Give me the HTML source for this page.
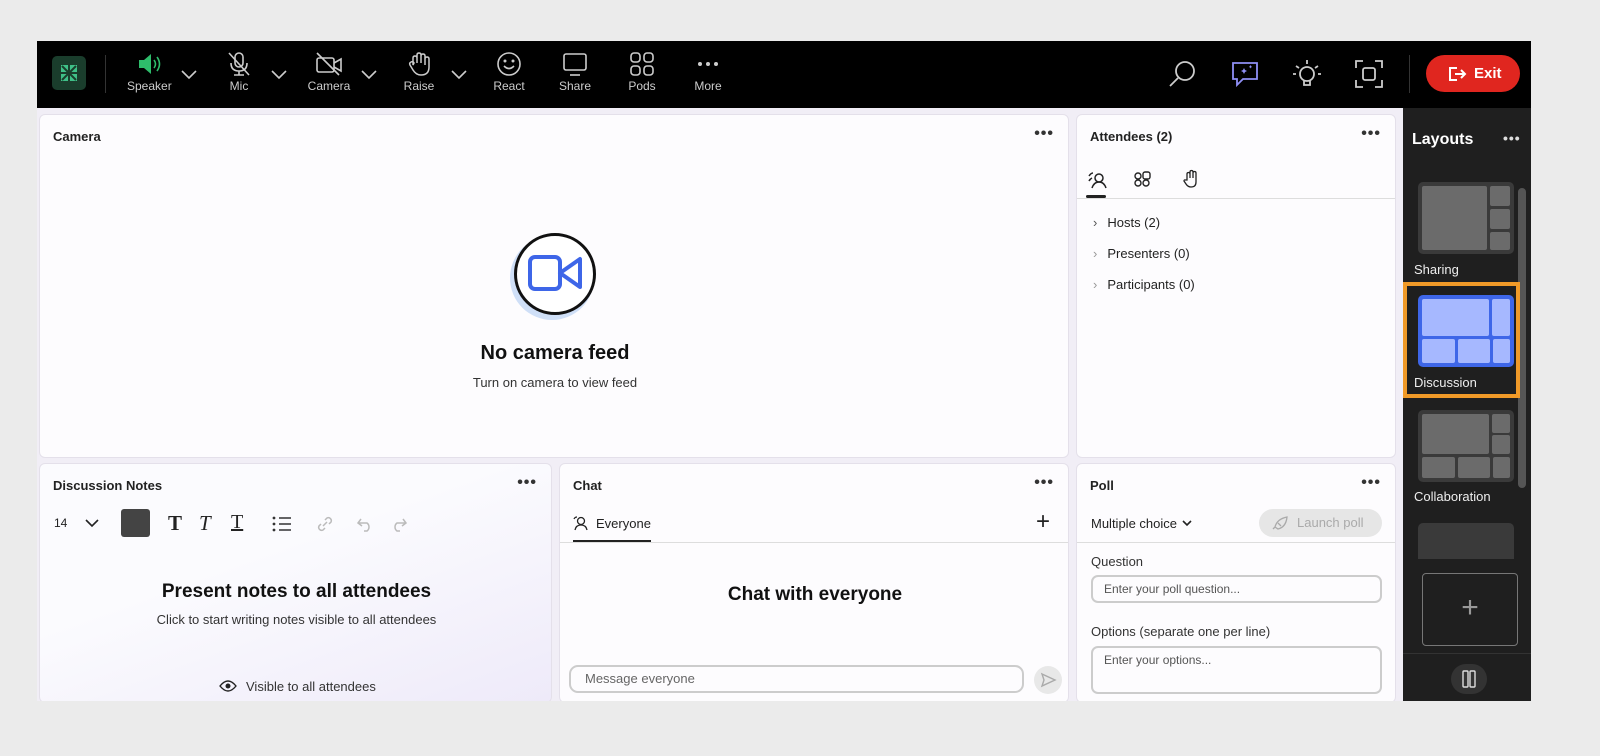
<!DOCTYPE html>
<html><head><meta charset="utf-8">
<style>
*{box-sizing:border-box;margin:0;padding:0}
body{width:1600px;height:756px;background:#ebebeb;font-family:"Liberation Sans",sans-serif;position:relative;overflow:hidden;color:#222}
.abs{position:absolute}
#app{position:absolute;left:37px;top:41px;width:1494px;height:660px;background:#f1eef6;overflow:hidden}
#tb{position:absolute;left:0;top:0;width:1494px;height:67px;background:#000}
.tbi{position:absolute;top:10px;text-align:center;color:#ddd;font-size:12px}
.tbi svg{display:block;margin:0 auto 2px}
.lbl{font-size:12px;color:#ccc}
.panel{position:absolute;background:#fdfcfe;border:1px solid #e4e0ea;border-radius:6px;overflow:hidden}
.ptitle{position:absolute;left:13px;top:14px;font-size:13px;font-weight:bold;color:#222}
.dots{position:absolute;top:10px;font-size:16px;font-weight:bold;letter-spacing:1px;color:#333}
#side{position:absolute;left:1366px;top:67px;width:128px;height:593px;background:#1f1f1f}
.lay{position:absolute;left:15px;width:96px;height:72px;background:#3a3a3a;border-radius:5px}
.lay div{position:absolute;background:#6b6b6b;border-radius:2px}
.slbl{position:absolute;left:11px;color:#eee;font-size:13px}
</style></head><body>
<div id="app">
 <div id="tb">
  <div class="abs" style="left:15px;top:15px;width:34px;height:34px;background:#1a3d2c;border-radius:5px"><svg width="34" height="34"><rect x="9" y="9" width="7" height="7" fill="#3fbf87"/><rect x="18" y="9" width="7" height="7" fill="#3fbf87"/><rect x="9" y="18" width="7" height="7" fill="#3fbf87"/><rect x="18" y="18" width="7" height="7" fill="#3fbf87"/><path d="M10 10L24 24M24 10L10 24" stroke="#1a3d2c" stroke-width="2"/></svg></div>
  <div class="abs" style="left:68px;top:14px;width:1px;height:38px;background:#333"></div>
  <div class="tbi" style="left:90px;width:44px"><svg width="28" height="26"><path d="M4 9h5l7-6v20l-7-6H4z" fill="#2ebd6b"/><path d="M19 9q3 4 0 8M22 6q5 7 0 14" stroke="#2ebd6b" stroke-width="1.6" fill="none"/></svg><span class="lbl">Speaker</span></div>
  <svg class="abs" style="left:143px;top:27px" width="18" height="12"><path d="M2 3l7 7 7-7" stroke="#ccc" stroke-width="1.6" fill="none"/></svg>
  <div class="tbi" style="left:180px;width:44px"><svg width="28" height="26"><rect x="10" y="2" width="8" height="14" rx="4" stroke="#ccc" stroke-width="1.6" fill="none"/><path d="M6 12q0 8 8 8t8-8M14 20v4M9 24h10M4 2l20 22" stroke="#ccc" stroke-width="1.6" fill="none"/></svg><span class="lbl">Mic</span></div>
  <svg class="abs" style="left:233px;top:27px" width="18" height="12"><path d="M2 3l7 7 7-7" stroke="#ccc" stroke-width="1.6" fill="none"/></svg>
  <div class="tbi" style="left:268px;width:48px"><svg width="30" height="26"><rect x="3" y="7" width="17" height="14" rx="2" stroke="#ccc" stroke-width="1.6" fill="none"/><path d="M20 12l7-4v12l-7-4M3 2l22 22" stroke="#ccc" stroke-width="1.6" fill="none"/></svg><span class="lbl">Camera</span></div>
  <svg class="abs" style="left:323px;top:27px" width="18" height="12"><path d="M2 3l7 7 7-7" stroke="#ccc" stroke-width="1.6" fill="none"/></svg>
  <div class="tbi" style="left:360px;width:44px"><svg width="28" height="26"><path d="M8 14V7q0-2 2-2t2 2v5V4q0-2 2-2t2 2v8V5q0-2 2-2t2 2v9V8q0-2 2-2t2 2v8q0 8-8 8q-5 0-8-5l-3-5q-1-2 1-3t3 1z" stroke="#ccc" stroke-width="1.5" fill="none"/></svg><span class="lbl">Raise</span></div>
  <svg class="abs" style="left:413px;top:27px" width="18" height="12"><path d="M2 3l7 7 7-7" stroke="#ccc" stroke-width="1.6" fill="none"/></svg>
  <div class="tbi" style="left:450px;width:44px"><svg width="28" height="26"><circle cx="14" cy="13" r="11" stroke="#ccc" stroke-width="1.6" fill="none"/><circle cx="10" cy="10" r="1.5" fill="#ccc"/><circle cx="18" cy="10" r="1.5" fill="#ccc"/><path d="M9 15q5 5 10 0" stroke="#ccc" stroke-width="1.6" fill="none"/></svg><span class="lbl">React</span></div>
  <div class="tbi" style="left:516px;width:44px"><svg width="28" height="26"><rect x="3" y="3" width="22" height="16" rx="2" stroke="#ccc" stroke-width="1.6" fill="none"/><path d="M9 24h10" stroke="#ccc" stroke-width="1.6"/></svg><span class="lbl">Share</span></div>
  <div class="tbi" style="left:583px;width:44px"><svg width="28" height="26"><rect x="3" y="2" width="9" height="9" rx="3" stroke="#ccc" stroke-width="1.6" fill="none"/><rect x="16" y="2" width="9" height="9" rx="3" stroke="#ccc" stroke-width="1.6" fill="none"/><rect x="3" y="15" width="9" height="9" rx="3" stroke="#ccc" stroke-width="1.6" fill="none"/><rect x="16" y="15" width="9" height="9" rx="3" stroke="#ccc" stroke-width="1.6" fill="none"/></svg><span class="lbl">Pods</span></div>
  <div class="tbi" style="left:649px;width:44px"><svg width="28" height="26"><circle cx="6" cy="13" r="2" fill="#ccc"/><circle cx="14" cy="13" r="2" fill="#ccc"/><circle cx="22" cy="13" r="2" fill="#ccc"/></svg><span class="lbl">More</span></div>
  <svg class="abs" style="left:1130px;top:17px" width="32" height="32"><circle cx="18" cy="13" r="9" stroke="#ccc" stroke-width="1.8" fill="none"/><path d="M11 20l-8 8" stroke="#ccc" stroke-width="1.8"/></svg>
  <svg class="abs" style="left:1192px;top:17px" width="32" height="32"><path d="M4 5h24v16H14l-6 6v-6H4z" stroke="#8f8ff5" stroke-width="1.8" fill="none"/><path d="M12 13l2-1 1-2 1 2 2 1-2 1-1 2-1-2zM20 9l1-1 .5-1 .5 1 1 1-1 .5-.5 1-.5-1z" fill="#8f8ff5"/></svg>
  <svg class="abs" style="left:1254px;top:17px" width="32" height="32"><circle cx="16" cy="16" r="7" stroke="#ccc" stroke-width="1.8" fill="none"/><path d="M13 23v4h6v-4M16 2v4M5 8l3 2M27 8l-3 2M2 16h3M27 16h3" stroke="#ccc" stroke-width="1.8" fill="none"/></svg>
  <svg class="abs" style="left:1316px;top:17px" width="32" height="32"><path d="M3 10V3h7M22 3h7v7M29 22v7h-7M10 29H3v-7" stroke="#ccc" stroke-width="1.8" fill="none"/><rect x="10" y="10" width="12" height="12" rx="2" stroke="#ccc" stroke-width="1.8" fill="none"/></svg>
  <div class="abs" style="left:1372px;top:14px;width:1px;height:38px;background:#333"></div>
  <div class="abs" style="left:1389px;top:14px;width:94px;height:37px;background:#e0261f;border-radius:19px;color:#fff;font-weight:bold;font-size:15px;line-height:37px;padding-left:48px"><svg class="abs" style="left:22px;top:10px" width="20" height="18"><path d="M9 3H2v12h7" stroke="#fff" stroke-width="2" fill="none"/><path d="M7 9h10M13 5l4 4-4 4" stroke="#fff" stroke-width="2" fill="none"/></svg>Exit</div>
 </div>

 <!-- Camera -->
 <div class="panel" style="left:2px;top:73px;width:1030px;height:344px">
  <div class="ptitle">Camera</div><div class="dots" style="right:14px">•••</div>
  <div class="abs" style="left:470px;top:121px;width:84px;height:84px;border-radius:50%;background:#cfdff7"></div>
  <div class="abs" style="left:474px;top:118px;width:82px;height:82px;border-radius:50%;border:3px solid #111;background:#fff"></div>
  <svg class="abs" style="left:488px;top:138px" width="58" height="42"><rect x="2" y="4" width="30" height="32" rx="5" stroke="#3e66e8" stroke-width="4" fill="none"/><path d="M32 20l20-14v28z" stroke="#3e66e8" stroke-width="4" fill="none" stroke-linejoin="round"/></svg>
  <div class="abs" style="left:0;width:1030px;top:227px;text-align:center;font-size:20px;font-weight:bold;color:#111">No camera feed</div>
  <div class="abs" style="left:0;width:1030px;top:260px;text-align:center;font-size:13px;color:#333">Turn on camera to view feed</div>
 </div>

 <!-- Attendees -->
 <div class="panel" style="left:1039px;top:73px;width:320px;height:344px">
  <div class="ptitle">Attendees (2)</div><div class="dots" style="right:14px">•••</div>
  <svg class="abs" style="left:10px;top:55px" width="20" height="20"><circle cx="12" cy="8" r="4" stroke="#222" stroke-width="1.5" fill="none"/><path d="M5 18q2-6 7-6t7 6M2 6q2-3 4-3M2 11q1-2 3-3" stroke="#222" stroke-width="1.5" fill="none"/></svg>
  <div class="abs" style="left:9px;top:80px;width:20px;height:3px;background:#222;border-radius:2px"></div>
  <svg class="abs" style="left:57px;top:55px" width="18" height="18"><circle cx="4" cy="6" r="3" stroke="#222" stroke-width="1.4" fill="none"/><rect x="9" y="2" width="7" height="7" rx="2" stroke="#222" stroke-width="1.4" fill="none"/><circle cx="4" cy="13" r="3" stroke="#222" stroke-width="1.4" fill="none"/><circle cx="12" cy="13" r="3" stroke="#222" stroke-width="1.4" fill="none"/></svg>
  <svg class="abs" style="left:104px;top:54px" width="20" height="20"><path d="M6 11V5q0-1.5 1.5-1.5T9 5v4V3q0-1.5 1.5-1.5T12 3v6V4q0-1.5 1.5-1.5T15 4v9q0 5-5 5-3 0-5-3l-2-3q0-1.5 1.5-1z" stroke="#222" stroke-width="1.3" fill="none"/></svg>
  <div class="abs" style="left:0;top:83px;width:320px;height:1px;background:#ddd"></div>
  <div class="abs" style="left:16px;top:92px;font-size:13px;line-height:31px;color:#222">
   <div><span style="color:#555;margin-right:10px">&#x203A;</span>Hosts (2)</div>
   <div><span style="color:#999;margin-right:10px">&#x203A;</span>Presenters (0)</div>
   <div><span style="color:#999;margin-right:10px">&#x203A;</span>Participants (0)</div>
  </div>
 </div>

 <!-- Notes -->
 <div class="panel" style="left:2px;top:422px;width:513px;height:240px;background:linear-gradient(160deg,#fbfbfe 40%,#eeeaf9)">
  <div class="ptitle">Discussion Notes</div><div class="dots" style="right:14px">•••</div>
  <div class="abs" style="left:14px;top:52px;font-size:12px">14</div>
  <svg class="abs" style="left:44px;top:53px" width="16" height="12"><path d="M2 3l6 6 6-6" stroke="#222" stroke-width="1.6" fill="none"/></svg>
  <div class="abs" style="left:81px;top:45px;width:29px;height:28px;background:#444;border-radius:3px"></div>
  <div class="abs" style="left:128px;top:47px;font-family:'Liberation Serif',serif;font-size:21px;font-weight:bold">T</div>
  <div class="abs" style="left:159px;top:47px;font-family:'Liberation Serif',serif;font-size:21px;font-style:italic">T</div>
  <div class="abs" style="left:191px;top:47px;font-family:'Liberation Serif',serif;font-size:20px;text-decoration:underline">T</div>
  <svg class="abs" style="left:232px;top:51px" width="20" height="18"><path d="M7 3h12M7 9h12M7 15h12" stroke="#333" stroke-width="1.6"/><circle cx="2" cy="3" r="1.4" fill="#333"/><circle cx="2" cy="9" r="1.4" fill="#333"/><circle cx="2" cy="15" r="1.4" fill="#333"/></svg>
  <svg class="abs" style="left:275px;top:50px" width="20" height="20"><path d="M8 12l4-4M6 10l-2 2a3 3 0 004 4l2-2M14 10l2-2a3 3 0 00-4-4l-2 2" stroke="#bbb" stroke-width="1.5" fill="none"/></svg>
  <svg class="abs" style="left:316px;top:51px" width="20" height="18"><path d="M5 4L2 8l4 3M2 8h9a5 5 0 010 8H8" stroke="#bbb" stroke-width="1.5" fill="none"/></svg>
  <svg class="abs" style="left:348px;top:51px" width="20" height="18"><path d="M15 4l3 4-4 3M18 8H9a5 5 0 000 8h3" stroke="#bbb" stroke-width="1.5" fill="none"/></svg>
  <div class="abs" style="left:0;width:513px;top:117px;text-align:center;font-size:19px;font-weight:bold;color:#111">Present notes to all attendees</div>
  <div class="abs" style="left:0;width:513px;top:148px;text-align:center;font-size:13px;color:#333">Click to start writing notes visible to all attendees</div>
  <svg class="abs" style="left:179px;top:215px" width="18" height="14"><path d="M1 7q8-10 16 0-8 10-16 0z" stroke="#222" stroke-width="1.4" fill="none"/><circle cx="9" cy="7" r="2.5" fill="#222"/></svg>
  <div class="abs" style="left:206px;top:215px;font-size:13px;color:#333">Visible to all attendees</div>
 </div>

 <!-- Chat -->
 <div class="panel" style="left:522px;top:422px;width:510px;height:240px">
  <div class="ptitle">Chat</div><div class="dots" style="right:14px">•••</div>
  <svg class="abs" style="left:13px;top:51px" width="16" height="16"><circle cx="8" cy="6" r="3.5" stroke="#222" stroke-width="1.3" fill="none"/><path d="M2 15q1-5 6-5t6 5M1 4q1-2 3-2" stroke="#222" stroke-width="1.3" fill="none"/></svg>
  <div class="abs" style="left:36px;top:52px;font-size:13px">Everyone</div>
  <div class="abs" style="left:13px;top:76px;width:78px;height:2px;background:#222"></div>
  <div class="abs" style="right:18px;top:44px;font-size:24px;font-weight:300;color:#222">+</div>
  <div class="abs" style="left:0;top:78px;width:510px;height:1px;background:#ddd"></div>
  <div class="abs" style="left:0;width:510px;top:120px;text-align:center;font-size:19px;font-weight:bold;color:#111">Chat with everyone</div>
  <div class="abs" style="left:9px;top:201px;width:455px;height:28px;border:2px solid #ccc;border-radius:9px;font-size:13px;color:#666;padding:4px 14px">Message everyone</div>
  <div class="abs" style="left:474px;top:202px;width:28px;height:28px;border-radius:50%;background:#e8e8e8"><svg width="28" height="28"><path d="M8 8l13 6-13 6 2-6z" stroke="#aaa" stroke-width="1.4" fill="none"/></svg></div>
 </div>

 <!-- Poll -->
 <div class="panel" style="left:1039px;top:422px;width:320px;height:240px">
  <div class="ptitle">Poll</div><div class="dots" style="right:14px">•••</div>
  <div class="abs" style="left:14px;top:52px;font-size:13px">Multiple choice <svg width="12" height="10"><path d="M2 3l4 4 4-4" stroke="#222" stroke-width="1.6" fill="none"/></svg></div>
  <div class="abs" style="left:182px;top:45px;width:123px;height:28px;border-radius:14px;background:#e6e6e6;color:#aaa;font-size:13px;line-height:28px;padding-left:38px"><svg class="abs" style="left:12px;top:6px" width="18" height="16"><path d="M4 12q2-8 12-10-1 10-9 12zM4 12l-2 2M7 8l3 3" stroke="#aaa" stroke-width="1.3" fill="none"/></svg>Launch poll</div>
  <div class="abs" style="left:0;top:78px;width:320px;height:1px;background:#ddd"></div>
  <div class="abs" style="left:14px;top:90px;font-size:13px;color:#333">Question</div>
  <div class="abs" style="left:14px;top:111px;width:291px;height:28px;border:2px solid #ccc;border-radius:7px;font-size:12px;color:#555;padding:5px 11px">Enter your poll question...</div>
  <div class="abs" style="left:14px;top:160px;font-size:13px;color:#333">Options (separate one per line)</div>
  <div class="abs" style="left:14px;top:182px;width:291px;height:48px;border:2px solid #ccc;border-radius:7px;font-size:12px;color:#555;padding:5px 11px">Enter your options...</div>
 </div>

 <!-- Side -->
 <div id="side">
  <div class="abs" style="left:9px;top:23px;color:#fff;font-size:16px;font-weight:bold">Layouts</div>
  <div class="abs" style="left:100px;top:22px;color:#ddd;font-size:14px;font-weight:bold;letter-spacing:1px">•••</div>
  <div class="abs" style="left:115px;top:62px;width:8px;height:380px"><div class="abs" style="left:0;top:18px;width:8px;height:300px;background:#555;border-radius:4px"></div></div>
  <div class="lay" style="top:74px;height:72px"><div style="left:4px;top:4px;width:65px;height:64px"></div><div style="left:72px;top:4px;width:20px;height:20px"></div><div style="left:72px;top:27px;width:20px;height:20px"></div><div style="left:72px;top:50px;width:20px;height:18px"></div></div>
  <div class="slbl" style="top:154px">Sharing</div>
  <div class="abs" style="left:0px;top:174px;width:117px;height:116px;border:4px solid #f09a28"></div>
  <div class="lay" style="top:187px;background:#3e66e8"><div style="left:4px;top:4px;width:67px;height:37px;background:#a6b8ff"></div><div style="left:74px;top:4px;width:18px;height:37px;background:#a6b8ff"></div><div style="left:4px;top:44px;width:33px;height:24px;background:#a6b8ff"></div><div style="left:40px;top:44px;width:32px;height:24px;background:#a6b8ff"></div><div style="left:75px;top:44px;width:17px;height:24px;background:#a6b8ff"></div></div>
  <div class="slbl" style="top:267px">Discussion</div>
  <div class="lay" style="top:302px"><div style="left:4px;top:4px;width:67px;height:40px"></div><div style="left:74px;top:4px;width:18px;height:19px"></div><div style="left:74px;top:25px;width:18px;height:19px"></div><div style="left:4px;top:47px;width:33px;height:21px"></div><div style="left:40px;top:47px;width:32px;height:21px"></div><div style="left:75px;top:47px;width:17px;height:21px"></div></div>
  <div class="slbl" style="top:381px">Collaboration</div>
  <div class="lay" style="top:415px;height:36px;border-radius:5px 5px 0 0"></div>
  <div class="abs" style="left:19px;top:465px;width:96px;height:73px;border:1px solid #777;border-radius:4px;color:#999;font-size:30px;font-weight:200;text-align:center;line-height:68px">+</div>
  <div class="abs" style="left:0;top:545px;width:128px;height:1px;background:#333"></div>
  <div class="abs" style="left:48px;top:556px;width:36px;height:30px;border-radius:15px;background:#333"><svg width="36" height="30"><rect x="12" y="7" width="5" height="16" rx="1" stroke="#ddd" stroke-width="1.4" fill="none"/><rect x="19" y="7" width="5" height="16" rx="1" stroke="#ddd" stroke-width="1.4" fill="none"/></svg></div>
 </div>
</div>
</body></html>
